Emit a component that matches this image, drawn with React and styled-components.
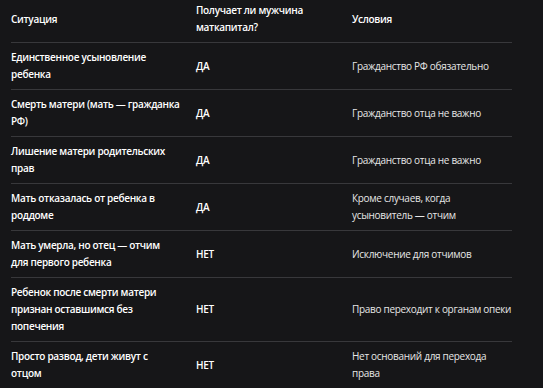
import styled, { createGlobalStyle } from "styled-components";

const Global = createGlobalStyle`
  html, body {
    margin: 0;
    background: #161618;
  }
  body {
    font-family: "Open Sans", "Noto Sans", sans-serif;
    color: #f2f2f2;
  }
`;

const Wrapper = styled.div`
  padding: 0 31px 0 11px;
  margin-top: -4px;
`;

const Table = styled.div`
  display: grid;
  grid-template-columns: 185px 156px 1fr;
`;

const Cell = styled.div`
  display: flex;
  align-items: center;
  padding: 6px ${(p) => p.$pr ?? 10}px 6px 0;
  min-height: 34px;
  border-bottom: 1px solid ${(p) => (p.$last ? "transparent" : "#38383b")};
  font-size: 10px;
  line-height: 17px;
  letter-spacing: -0.3px;
  white-space: pre-line;
  font-weight: ${(p) => (p.$light ? 400 : 600)};
  color: ${(p) => (p.$light ? "#e6e6e6" : "#ffffff")};
`;

const rows = [
  ["Единственное усыновление ребенка", "ДА", "Гражданство РФ обязательно"],
  ["Смерть матери (мать — гражданка РФ)", "ДА", "Гражданство отца не важно"],
  ["Лишение матери родительских прав", "ДА", "Гражданство отца не важно"],
  ["Мать отказалась от ребенка в роддоме", "ДА", "Кроме случаев, когда усыновитель — отчим"],
  ["Мать умерла, но отец — отчим\nдля первого ребенка", "НЕТ", "Исключение для отчимов"],
  ["Ребенок после смерти матери признан оставшимся без попечения", "НЕТ", "Право переходит к органам опеки"],
  ["Просто развод, дети живут с\nотцом", "НЕТ", "Нет оснований для перехода права"],
];

const App = () => (
  <>
    <Global />
    <Wrapper>
      <Table>
        <Cell $pr={16}>Ситуация</Cell>
        <Cell>Получает ли мужчина маткапитал?</Cell>
        <Cell $pr={0}>Условия</Cell>
        {rows.map((r, i) => {
          const last = i === rows.length - 1;
          return [
            <Cell key={i + "a"} $last={last} $pr={16}>{r[0]}</Cell>,
            <Cell key={i + "b"} $last={last}>{r[1]}</Cell>,
            <Cell key={i + "c"} $last={last} $pr={0} $light>{r[2]}</Cell>,
          ];
        })}
      </Table>
    </Wrapper>
  </>
);

export default App;
